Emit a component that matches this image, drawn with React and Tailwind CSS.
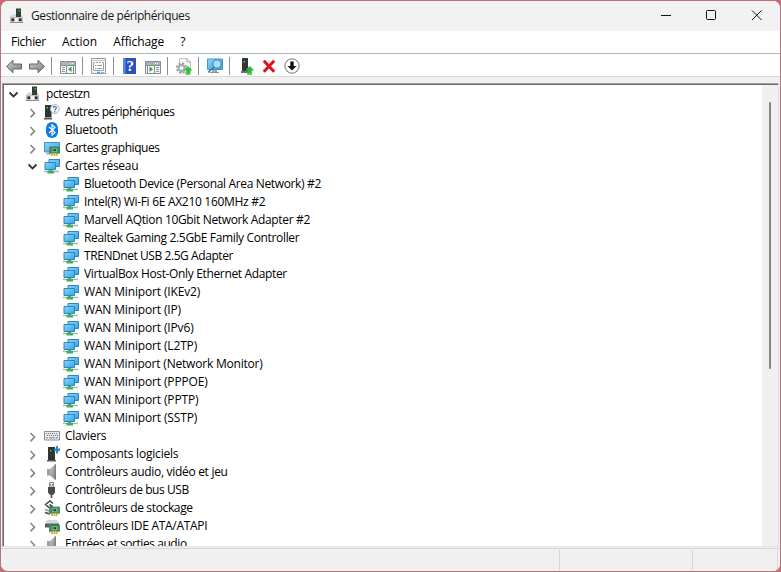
const toolbar = [
  "back", "forward", "sep", "tree", "sep", "properties", "sep", "help", "action",
  "sep", "update", "sep", "scan", "sep", "install", "remove", "disable",
]

const tight = "tracking-[-0.43px]"
const snug = "tracking-[-0.35px]"
const loose = "tracking-[-0.15px]"

const rows = [
  { level: 0, icon: "computer", label: "pctestzn", open: true, track: tight },
  { level: 1, icon: "unknown", label: "Autres périphériques", track: tight },
  { level: 1, icon: "bluetooth", label: "Bluetooth" },
  { level: 1, icon: "display", label: "Cartes graphiques", track: tight },
  { level: 1, icon: "network", label: "Cartes réseau", open: true },
  { level: 2, icon: "network", label: "Bluetooth Device (Personal Area Network) #2", track: snug },
  { level: 2, icon: "network", label: "Intel(R) Wi-Fi 6E AX210 160MHz #2" },
  { level: 2, icon: "network", label: "Marvell AQtion 10Gbit Network Adapter #2", track: snug },
  { level: 2, icon: "network", label: "Realtek Gaming 2.5GbE Family Controller", track: snug },
  { level: 2, icon: "network", label: "TRENDnet USB 2.5G Adapter", track: tight },
  { level: 2, icon: "network", label: "VirtualBox Host-Only Ethernet Adapter", track: snug },
  { level: 2, icon: "network", label: "WAN Miniport (IKEv2)", track: loose },
  { level: 2, icon: "network", label: "WAN Miniport (IP)", track: loose },
  { level: 2, icon: "network", label: "WAN Miniport (IPv6)", track: loose },
  { level: 2, icon: "network", label: "WAN Miniport (L2TP)", track: loose },
  { level: 2, icon: "network", label: "WAN Miniport (Network Monitor)", track: "tracking-[-0.2px]" },
  { level: 2, icon: "network", label: "WAN Miniport (PPPOE)", track: loose },
  { level: 2, icon: "network", label: "WAN Miniport (PPTP)", track: loose },
  { level: 2, icon: "network", label: "WAN Miniport (SSTP)", track: loose },
  { level: 1, icon: "keyboard", label: "Claviers" },
  { level: 1, icon: "software", label: "Composants logiciels", track: "tracking-[-0.2px]" },
  { level: 1, icon: "speaker", label: "Contrôleurs audio, vidéo et jeu" },
  { level: 1, icon: "usb", label: "Contrôleurs de bus USB", track: tight },
  { level: 1, icon: "storage", label: "Contrôleurs de stockage", track: snug },
  { level: 1, icon: "ide", label: "Contrôleurs IDE ATA/ATAPI" },
  { level: 1, icon: "speaker", label: "Entrées et sorties audio", track: tight },
]

const indent = { 0: "pl-[2px]", 1: "pl-[21px]", 2: "pl-[40px]" }

// Small green expansion card shared by several 16px icons
const card = (
  <>
    <path d="M5.5 6.5v8" stroke="#8a8f92" />
    <path d="M6 7h9.500v6.300H6z" fill="#3d9d64" stroke="#23724a" strokeWidth=".7" />
    <path d="M9 8.800h3.600v2.800H9z" fill="#173b28" stroke="#a9d8b8" strokeWidth=".7" />
    <path d="M7 13.500h6.500V16H7z" fill="#f5a81e" />
    <path d="M9.300 13.500V16M11.400 13.500V16" stroke="#fff" strokeWidth=".5" />
  </>
)

const treeIcons = {
  computer: (
    <>
      <path d="M3 6.500h10l1 3H1z" fill="#d6d6d8" />
      <path d="M7 .5h5V9H7z" fill="#3a3a3a" />
      <path d="M9.500 2H11v1.500H9.500z" fill="#22d83a" />
      <path d="M1 9h13v6H1z" fill="#bfbfc3" />
      <path d="M1 14.500h13" stroke="#8e8e93" />
      <path d="M2.500 10.500h2.500v2.500H2.500zM10 10.500h2.500v2.500H10z" fill="#26262a" />
      <path d="M6 10h3v4H6z" fill="#f2f2f2" />
    </>
  ),
  unknown: (
    <>
      <path d="M1 1h6.500v12.500H1z" fill="#333" />
      <path d="M0 14h8v1.500H0z" fill="#555" />
      <path d="M2.500 3H4v1.500H2.500z" fill="#26dc3c" />
      <circle cx="10.800" cy="5" r="4.400" fill="#f7fafc" stroke="#a9b2b8" />
      <path d="M9.300 3.900c0-2 3.100-1.900 3 0 0 1.200-1.500 1.100-1.500 2.300M10.800 7v1.200" fill="none" stroke="#2f6fa3" strokeWidth="1.100" />
    </>
  ),
  bluetooth: (
    <>
      <rect x="2" y="0" width="12" height="16" rx="6" fill="#0a7bec" />
      <path d="M5 5l6 5.500-3 2.700V2.800l3 2.700L5 11" fill="none" stroke="#fff" strokeWidth="1.200" />
    </>
  ),
  display: (
    <>
      <path d="M.5 2.500h15v9.500H.5z" fill="url(#screen)" stroke="#3f93c4" />
      <path d="M3 13h3v1.500H2z" fill="#91a5ad" />
      {card}
    </>
  ),
  network: (
    <>
      <path d="M5 1.500h10.500v7H5z" fill="url(#screen)" stroke="#2f86bd" />
      <path d="M1 4.500h10.500v7H1z" fill="url(#screen)" stroke="#2f86bd" />
      <path d="M5 12h3v2H5z" fill="#36a454" />
      <path d="M0 13.500h15" stroke="#a6b5ae" strokeWidth="1.300" />
      <path d="M3.500 12.800h6.500v2.700H3.500z" fill="#3cb355" />
    </>
  ),
  keyboard: (
    <>
      <path d="M.5 3.500h15v8.500H.5z" fill="#e7e8ea" stroke="#8a9197" />
      <path d="M2 5.500h12M3 7.500h11" stroke="#747b81" strokeDasharray="1 1" />
      <path d="M2 9.800h2M5 9.800h6M12 9.800h2" stroke="#81888e" />
    </>
  ),
  software: (
    <>
      <path d="M4 1h7v13H4z" fill="#333" />
      <path d="M3 14h9v1.500H3z" fill="#5b5b5b" />
      <path d="M6 4h1.600v1.600H6z" fill="#26dc3c" />
      <path d="M10 2.500h2V0h2v2.500h2V5h-2v2.500h-2V5h-2z" fill="#2589d2" />
    </>
  ),
  speaker: (
    <>
      <path d="M3 5h3v6.500H3z" fill="#9ba1a6" />
      <path d="M6 5L11.500 0v16L6 11.500z" fill="url(#metal)" />
      <path d="M11.300 .3v15.400" stroke="#6b7075" />
    </>
  ),
  usb: (
    <>
      <path d="M5.500.5h4V5h-4z" fill="#e4e4e4" stroke="#909090" />
      <path d="M6.500 2v1.500M8.500 2v1.500" stroke="#555" strokeWidth=".8" />
      <path d="M4 5h7v5.500L9 13H6l-2-2.500z" fill="#4a4c4d" />
      <path d="M7.500 12v4" stroke="#555" strokeWidth="1.600" />
    </>
  ),
  storage: (
    <>
      <path d="M9 3.500L6 1 1.500 4.500 5.500 8 8 6 5.500 4.500" fill="none" stroke="#474747" strokeWidth="1.500" />
      <path d="M1 9.500l4 1.500" stroke="#999" strokeWidth="1.500" />
      <path d="M1 12.500l5 1.500" stroke="#444" strokeWidth="1.500" />
      {card}
    </>
  ),
  ide: (
    <>
      <path d="M3.500 2h9.500l2 3.500H1z" fill="#d5d6d8" />
      <path d="M1 5.500h14V9.500H1z" fill="#595c5f" />
      {card}
    </>
  ),
}

const greenUp = "M4.5 0L9 4.5H6.5V7h-4V4.5H0z"

const toolIcons = {
  back: <path d="M4.500 12.500L11 6.300V10h8.500v5H11v3.700z" fill="url(#metal)" stroke="#666" />,
  forward: <path d="M19.500 12.500L13 6.300V10H4.500v5H13v3.700z" fill="url(#metal)" stroke="#666" />,
  tree: (
    <>
      <path d="M4.500 7.500h15v12h-15z" fill="#f6f6f6" stroke="#858d96" />
      <path d="M5 8h14v3H5z" fill="#aab3bc" />
      <path d="M14 9.500h4" stroke="#fff" strokeDasharray="1 1" />
      <path d="M5 11.500h14M10.500 11v8M17.500 12v7" stroke="#858d96" />
      <path d="M6 13.500h3M6 15.500h3M6 17.500h3" stroke="#777f88" strokeWidth=".8" />
      <path d="M15.500 12.500v5.500L12 15.200z" fill="#36a424" />
    </>
  ),
  properties: (
    <>
      <path d="M4.500 4.500h14v15h-14z" fill="#f8f8f8" stroke="#929aa2" />
      <path d="M5 6.500h13" stroke="#c3c9cf" />
      <path d="M6.500 8.500h10v8h-10z" fill="#fff" stroke="#98a1aa" />
      <path d="M8 8.500h7" stroke="#fff" strokeDasharray="1 2" />
      <path d="M8 11.500h1.500M8 14.500h1.500" stroke="#7b9cb4" strokeWidth="1.200" />
      <path d="M10.500 11.500h4.500M10.500 14.500h4.500" stroke="#8d959c" />
      <path d="M10 18.500h3" stroke="#18b4ee" strokeWidth="1.500" />
      <path d="M14 18.500h3" stroke="#aab3bc" />
    </>
  ),
  help: (
    <>
      <path d="M5 4h13v16H5z" fill="#2c52bd" />
      <path d="M5 4h2.500v16H5z" fill="#5e86df" />
      <text x="8.500" y="17.300" fontSize="15" fontFamily="Liberation Serif, serif" fontWeight="700" fill="#fff">?</text>
    </>
  ),
  action: (
    <>
      <path d="M4.500 7.500h15v12h-15z" fill="#f6f6f6" stroke="#858d96" />
      <path d="M5 8h14v3H5z" fill="#aab3bc" />
      <path d="M14 9.500h4" stroke="#fff" strokeDasharray="1 1" />
      <path d="M5 11.500h14M6.500 12v7M13.500 11v8" stroke="#858d96" />
      <path d="M15 13.500h3M15 15.500h3M15 17.500h3" stroke="#777f88" strokeWidth=".8" />
      <path d="M8.500 12.500v5.500l3.500-2.800z" fill="#36a424" />
    </>
  ),
  update: (
    <>
      <path d="M7.500 4.500H15l3.500 3.500v11h-11z" fill="#f7f7f7" stroke="#bfc3c6" />
      <path d="M15 4.500V8h3.500" fill="none" stroke="#aaa" />
      <circle cx="9.500" cy="14" r="4.700" fill="none" stroke="#91979d" strokeWidth="1.600" strokeDasharray="2 1.700" />
      <circle cx="9.500" cy="14" r="3" fill="#f4f4f4" stroke="#a4a9ad" strokeWidth="1.800" />
      <path d={greenUp} fill="#2cc43b" transform="translate(11.5 12)" />
      <path d="M13.500 20h5" stroke="#2cc43b" strokeWidth="1.400" />
    </>
  ),
  scan: (
    <>
      <path d="M4.500 5h15v10.500h-15z" fill="url(#screen)" stroke="#4796be" />
      <path d="M9 16h5v2H9z" fill="#a5adb2" />
      <path d="M7 18.500h9" stroke="#899197" />
      <path d="M11 13l-6 5.500" stroke="#526f80" strokeWidth="1.600" />
      <circle cx="14" cy="10" r="4.200" fill="#a5defb" stroke="#3f7b9a" />
    </>
  ),
  install: (
    <>
      <path d="M8 4h6v13H8z" fill="#353535" />
      <path d="M9.500 7h1.600v1.600H9.500z" fill="#26dc3c" />
      <path d="M7 17h7v2H7z" fill="#707070" />
      <path d={greenUp} fill="#2cb440" transform="translate(11.2 12)" />
      <path d="M13.200 20h5" stroke="#2cb440" strokeWidth="1.400" />
    </>
  ),
  remove: <path d="M6.800 6.800l10.400 11M17.200 6.800L6.800 17.800" stroke="#dc1119" strokeWidth="3" />,
  disable: (
    <>
      <circle cx="12" cy="12" r="7.200" fill="#fdfdfd" stroke="#777" />
      <path d="M10.300 7.500h3.400V12h2.800L12 16.500 7.500 12h2.800z" fill="#111" />
    </>
  ),
}

function SvgDefs() {
  return (
    <svg width="0" height="0" className="absolute">
      <defs>
        <linearGradient id="screen" x1="0" y1="0" x2="1" y2="1">
          <stop offset="0" stopColor="#8ad6fb" />
          <stop offset="1" stopColor="#34a4ea" />
        </linearGradient>
        <linearGradient id="metal" x1="0" y1="0" x2="1" y2="1">
          <stop offset="0" stopColor="#c9cbcd" />
          <stop offset="1" stopColor="#7c7f83" />
        </linearGradient>
      </defs>
    </svg>
  )
}

function Chevron({ open }) {
  return (
    <svg width="21" height="18" viewBox="0 0 21 18" fill="none" className="shrink-0">
      {open ? (
        <path d="M3.500 7.500l4 4 4-4" stroke="#333" strokeWidth="1.800" />
      ) : (
        <path d="M5.500 6l4 4.200-4 4.200" stroke="#8b8b8b" strokeWidth="1.700" />
      )}
    </svg>
  )
}

function TreeRow({ row }) {
  return (
    <div className={`flex h-[18px] shrink-0 items-center ${indent[row.level]}`}>
      {row.level < 2 ? <Chevron open={row.open} /> : <span className="w-[21px]" />}
      <svg width="16" height="16" viewBox="0 0 16 16" className="-ml-[2px] mr-[5px] shrink-0">
        {treeIcons[row.icon]}
      </svg>
      <span className={`leading-[18px] ${row.track || "tracking-[-0.3px]"}`}>{row.label}</span>
    </div>
  )
}

export default function App() {
  return (
    <div className="h-[572px] w-[781px] bg-[#c86b78]">
      <SvgDefs />
      <div className="flex h-full flex-col overflow-hidden whitespace-nowrap rounded-lg border border-[#b9727c] bg-[#f0f0f0] font-['Open_Sans','Noto_Sans',sans-serif] text-[12px] text-black">
        {/* Title bar */}
        <div className="flex h-[30px] shrink-0 items-center bg-[#f2f2f2] pl-2">
          <svg width="16" height="16" viewBox="0 0 16 16">{treeIcons.computer}</svg>
          <span className="ml-[6px] tracking-[-0.41px] text-[#191919]">Gestionnaire de périphériques</span>
          <svg width="138" height="30" viewBox="0 0 138 30" fill="none" stroke="#111" className="ml-auto mr-px">
            <path d="M20 14.500h10" />
            <rect x="65.500" y="9.500" width="9" height="9" rx="1" />
            <path d="M111 9.500l9.500 9.500M120.500 9.500l-9.500 9.500" />
          </svg>
        </div>

        {/* Menu */}
        <div className="flex h-[23px] shrink-0 items-center gap-[16px] border-b border-[#b1b5bd] bg-white pl-[10px]">
          <span className="tracking-[-0.3px]">Fichier</span>
          <span>Action</span>
          <span className="tracking-[-0.07px]">Affichage</span>
          <span>?</span>
        </div>

        {/* Toolbar */}
        <div className="flex h-[23px] shrink-0 border-b border-[#d9d9d9] bg-white pl-px">
          {toolbar.map((name, i) =>
            name === "sep" ? (
              <span key={i} className="ml-[3px] mr-1 mt-[3px] h-[18px] w-px bg-[#8d8d8d]" />
            ) : (
              <svg key={i} width="23" height="22" viewBox="0 0 23 22">{toolIcons[name]}</svg>
            )
          )}
        </div>

        {/* Device tree */}
        <div className="ml-px mr-px mt-[6px] flex h-[464px] shrink-0 border border-[#a0a0a0] border-b-[#e3e3e3] border-r-[#e3e3e3] bg-white">
          <div className="flex flex-1 flex-col overflow-hidden border-l border-t border-[#696969]">
            {rows.map((row) => (
              <TreeRow key={row.label} row={row} />
            ))}
          </div>
          <div className="flex w-4 justify-center border-t border-[#696969] bg-[#f0f0f0] pt-[17px]">
            <div className="h-[267px] w-[2px] rounded bg-[#858585]" />
          </div>
        </div>

        {/* Status bar */}
        <div className="mt-px flex flex-1 border-t border-[#d7d7d7] bg-[#f0f0f0] py-px">
          <div className="w-[559px] border-r border-[#d7d7d7]" />
          <div className="w-[133px] border-r border-[#d7d7d7]" />
          <div className="w-[85px] border-r border-[#d7d7d7]" />
        </div>
      </div>
    </div>
  )
}
